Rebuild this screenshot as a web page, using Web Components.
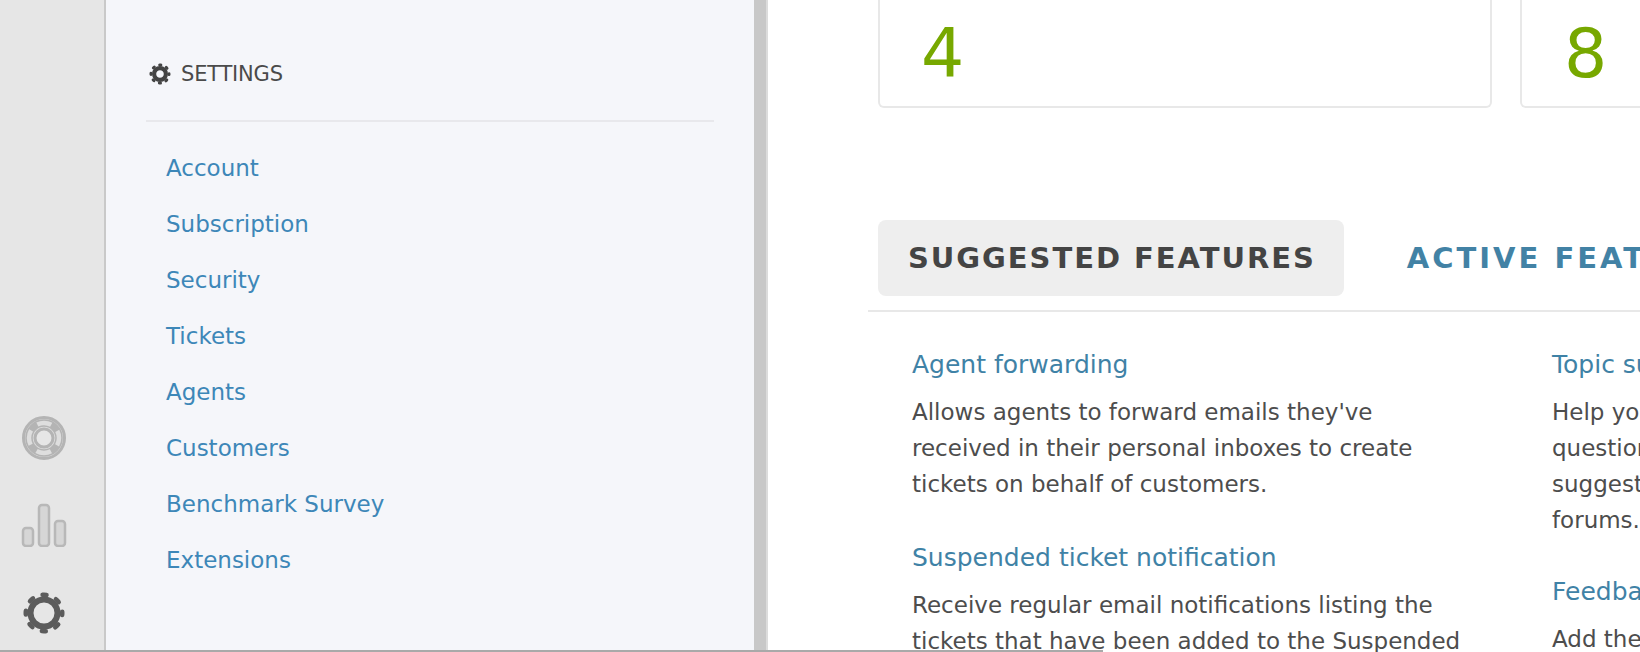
<!DOCTYPE html>
<html>
<head>
<meta charset="utf-8">
<title>Settings</title>
<style>
  html, body { margin: 0; height: 100%; overflow: hidden; background: #fff; }
  body { font-family: "DejaVu Sans", sans-serif; color: #4a4a4a; }
  app-shell { height: 652px; }
</style>
</head>
<body>
<app-shell>
  <icon-rail slot="rail"></icon-rail>
  <settings-panel slot="panel">
    <settings-link>Account</settings-link>
    <settings-link>Subscription</settings-link>
    <settings-link>Security</settings-link>
    <settings-link>Tickets</settings-link>
    <settings-link>Agents</settings-link>
    <settings-link>Customers</settings-link>
    <settings-link>Benchmark Survey</settings-link>
    <settings-link>Extensions</settings-link>
  </settings-panel>
  <stat-card slot="stats" value="4" wide></stat-card>
  <stat-card slot="stats" value="8"></stat-card>
  <feature-tabs slot="tabs"></feature-tabs>
  <feature-item slot="col1" heading="Agent forwarding">Allows agents to forward emails they've<br>received in their personal inboxes to create<br>tickets on behalf of customers.</feature-item>
  <feature-item slot="col1" heading="Suspended ticket notification">Receive regular email notifications listing the<br>tickets that have been added to the Suspended</feature-item>
  <feature-item slot="col2" heading="Topic suggestions">Help your<br>questions<br>suggest<br>forums.</feature-item>
  <feature-item slot="col2" heading="Feedback">Add the</feature-item>
</app-shell>

<script>
// gear built from a ring and a dashed ring for the teeth
function gear(size, c, ring, hole, tooth) {
  const r = (ring + hole) / 2;
  const w = ring - hole;
  const tr = ring + tooth / 2 - 0.5;
  const d = 2 * Math.PI * tr / 8;
  const dash = d * 0.6 - tooth;
  return `<svg width="${size}" height="${size}" viewBox="-${size/2} -${size/2} ${size} ${size}">
    <circle r="${r}" fill="none" stroke="${c}" stroke-width="${w}"/>
    <circle r="${tr}" fill="none" stroke="${c}" stroke-width="${tooth}" stroke-linecap="round" stroke-dasharray="${dash} ${d - dash}" stroke-dashoffset="${dash / 2}"/>
  </svg>`;
}

class AppShell extends HTMLElement {
  connectedCallback() {
    this.attachShadow({ mode: 'open' });
    this.shadowRoot.innerHTML = `
      <style>
        :host { display: flex; width: 1640px; overflow: hidden; position: relative; }
        .divider { flex: none; width: 14px; background: #c8c8c8; box-shadow: inset -2px 0 0 #dcdcdc; }
        main { flex: 1; min-width: 0; overflow: hidden; }
        .stats { display: flex; gap: 28px; padding-left: 110px; }
        .features { display: grid; grid-template-columns: 640px 1fr; padding: 35px 0 0 144px; white-space: nowrap; }
        .col { display: flex; flex-direction: column; gap: 38px; }
        .col + .col { gap: 36px; }
        /* grey window edge running along the bottom of the shot */
        .edge { position: absolute; left: 0; bottom: 0; width: 1103px; height: 2px; background: #a9a9a9; }
      </style>
      <slot name="rail"></slot>
      <slot name="panel"></slot>
      <div class="divider"></div>
      <main>
        <div class="stats"><slot name="stats"></slot></div>
        <slot name="tabs"></slot>
        <div class="features">
          <div class="col"><slot name="col1"></slot></div>
          <div class="col"><slot name="col2"></slot></div>
        </div>
      </main>
      <div class="edge"></div>
    `;
  }
}

class IconRail extends HTMLElement {
  connectedCallback() {
    this.attachShadow({ mode: 'open' });
    this.shadowRoot.innerHTML = `
      <style>
        :host { display: flex; flex: none; box-sizing: border-box; width: 106px; flex-direction: column; align-items: center; justify-content: flex-end; background: #e6e6e6; border-right: 2px solid #c9c9c9; padding: 0 16px 18px 0; }
        svg { display: block; }
        .help { margin-bottom: 42px; }
        .stats { margin-bottom: 45px; }
      </style>
      <svg class="help" width="46" height="46" viewBox="-23 -23 46 46">
        <circle r="20.5" fill="#dcdcdc" stroke="#b4b4b4" stroke-width="3"/>
        <circle r="15" fill="none" stroke="#b4b4b4" stroke-width="7.5"/>
        <circle r="15" fill="none" stroke="#dedede" stroke-width="4.5" stroke-dasharray="15 8.56" stroke-dashoffset="7.5" transform="rotate(-90)"/>
        <circle r="9" fill="#e6e6e6" stroke="#b4b4b4" stroke-width="3"/>
      </svg>
      <svg class="stats" width="46" height="44" viewBox="0 0 46 44">
        <g fill="#d6d6d6" stroke="#b8b8b8" stroke-width="2.5">
          <rect x="2" y="25" width="10" height="18" rx="3"/>
          <rect x="18" y="2" width="10" height="41" rx="3"/>
          <rect x="34" y="18" width="10" height="25" rx="3"/>
        </g>
      </svg>
      ${gear(42, '#5c5c5c', 16.5, 10.5, 4.5)}
    `;
  }
}

class SettingsPanel extends HTMLElement {
  connectedCallback() {
    this.attachShadow({ mode: 'open' });
    this.shadowRoot.innerHTML = `
      <style>
        :host { display: block; flex: none; box-sizing: border-box; width: 648px; height: 652px; background: #f5f6fa; padding: 60px 40px 0; }
        header { display: flex; align-items: center; gap: 10px; height: 28px; padding: 0 3px 32px; border-bottom: 2px solid #e8e8ec; font-size: 21px; color: #4a4a4a; letter-spacing: -0.2px; }
        header svg { display: block; flex: none; }
        nav { display: flex; flex-direction: column; padding: 18px 0 0 20px; }
      </style>
      <header>${gear(22, '#444', 8, 3.8, 3)}<span>SETTINGS</span></header>
      <nav><slot></slot></nav>
    `;
  }
}

class SettingsLink extends HTMLElement {
  connectedCallback() {
    this.attachShadow({ mode: 'open' });
    this.shadowRoot.innerHTML = `
      <style>
        :host { display: block; height: 56px; line-height: 56px; font-size: 23px; color: #3d87b8; }
      </style>
      <slot></slot>
    `;
  }
}

class StatCard extends HTMLElement {
  connectedCallback() {
    this.attachShadow({ mode: 'open' });
    this.shadowRoot.innerHTML = `
      <style>
        :host { display: block; flex: none; box-sizing: border-box; height: 108px; border: 2px solid #e8e8e8; border-top: 0; border-radius: 0 0 6px 6px; padding-left: 42px; width: 300px; color: #77a800; font-size: 68px; line-height: 108px; }
        :host([wide]) { width: 614px; padding-left: 41px; }
      </style>
      <span>${this.getAttribute('value')}</span>
    `;
  }
}

class FeatureTabs extends HTMLElement {
  connectedCallback() {
    this.attachShadow({ mode: 'open' });
    this.shadowRoot.innerHTML = `
      <style>
        :host { display: flex; gap: 63px; margin: 112px 0 0 100px; padding: 0 0 14px 10px; border-bottom: 2px solid #e8e8e8; white-space: nowrap; font-size: 29px; font-weight: 700; letter-spacing: 1.95px; }
        span { display: block; line-height: 76px; height: 76px; }
        .on { background: #eee; color: #444; border-radius: 8px; padding: 0 28px 0 30px; }
        .off { color: #4282a5; letter-spacing: 3px; }
      </style>
      <span class="on">SUGGESTED FEATURES</span>
      <span class="off">ACTIVE FEATURES</span>
    `;
  }
}

class FeatureItem extends HTMLElement {
  connectedCallback() {
    this.attachShadow({ mode: 'open' });
    this.shadowRoot.innerHTML = `
      <style>
        :host { display: block; }
        h3 { margin: 0 0 11px; font-weight: 400; font-size: 25px; line-height: 36px; color: #3f82a6; }
        p { margin: 0; font-size: 23px; line-height: 36px; color: #4d4d4d; }
      </style>
      <h3>${this.getAttribute('heading')}</h3>
      <p><slot></slot></p>
    `;
  }
}

customElements.define('app-shell', AppShell);
customElements.define('icon-rail', IconRail);
customElements.define('settings-panel', SettingsPanel);
customElements.define('settings-link', SettingsLink);
customElements.define('stat-card', StatCard);
customElements.define('feature-tabs', FeatureTabs);
customElements.define('feature-item', FeatureItem);
</script>
</body>
</html>
